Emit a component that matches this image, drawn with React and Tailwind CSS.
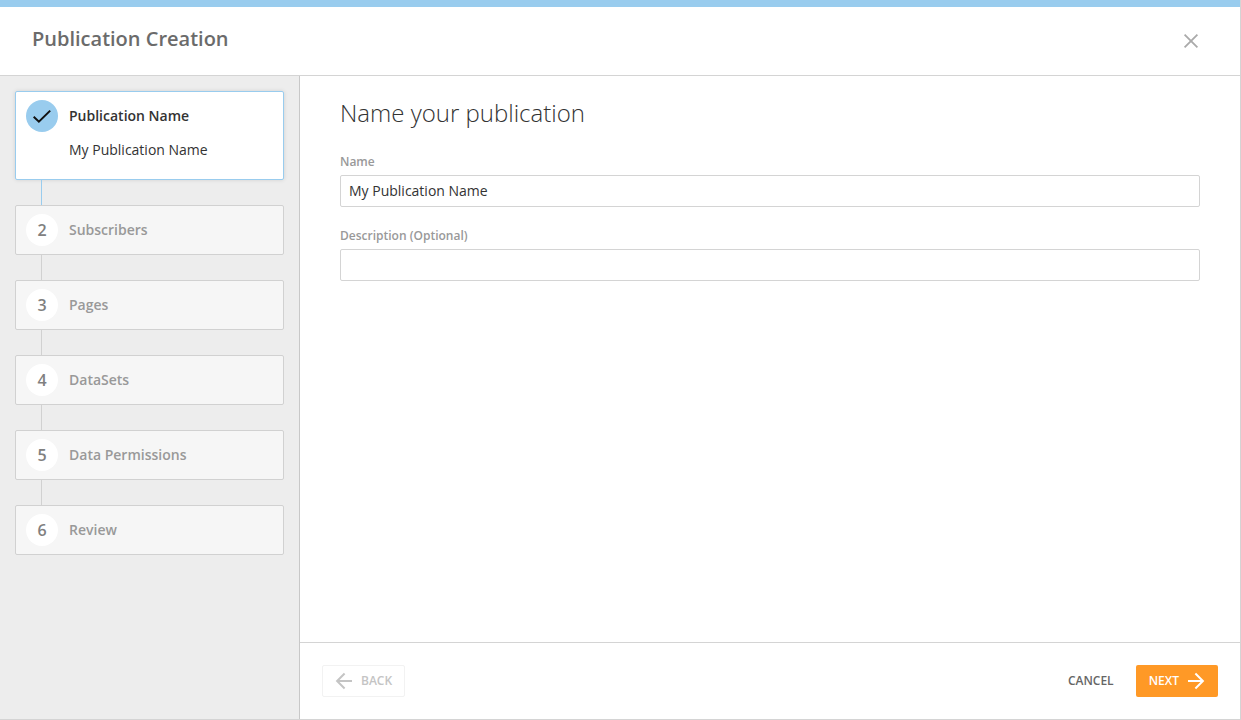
import React, { useState } from "react";

const STEPS = [
  { title: "Publication Name" },
  { title: "Subscribers" },
  { title: "Pages" },
  { title: "DataSets" },
  { title: "Data Permissions" },
  { title: "Review" },
];

function CloseIcon() {
  return (
    <svg width="16" height="16" viewBox="0 0 16 16" fill="none" stroke="currentColor" strokeWidth="1.8" aria-hidden="true">
      <path d="M1.6 1.6 14.4 14.4M14.4 1.6 1.6 14.4" />
    </svg>
  );
}

function CheckIcon() {
  return (
    <svg width="20" height="16" viewBox="0 0 20 16" fill="none" stroke="#111" strokeWidth="2" aria-hidden="true">
      <path d="M1.7 8.7 6.9 13.7 18.2 2.6" />
    </svg>
  );
}

function ArrowIcon({ className }) {
  return (
    <svg className={className} width="18" height="18" viewBox="0 0 18 18" fill="none" stroke="currentColor" strokeWidth="2" aria-hidden="true">
      <path d="M1 9H16M8.4 1.5 15.9 9 8.4 16.5" />
    </svg>
  );
}

function Step({ number, title, value, active }) {
  return (
    <li className="flex flex-col">
      {number > 1 && (
        <span className={number === 2 ? "ml-[26px] h-[25px] w-px bg-[#99ccee]" : "ml-[26px] h-[25px] w-px bg-[#d1d1d1]"} />
      )}
      <button
        type="button"
        aria-current={active ? "step" : undefined}
        className={
          active
            ? "flex w-full items-start gap-[11px] rounded-xs border border-[#99ccee] bg-white px-[10px] pt-2 pb-[17px] text-left shadow-[0_0_4px_rgba(0,0,0,0.12)]"
            : "flex w-full items-start gap-[11px] rounded-xs border border-[#d1d1d1] bg-[#f6f6f6] px-[10px] py-2 text-left"
        }
      >
        <span
          className={
            active
              ? "flex size-8 shrink-0 items-center justify-center rounded-full bg-[#99ccee]"
              : "flex size-8 shrink-0 items-center justify-center rounded-full bg-white text-base font-semibold text-[#808080]"
          }
        >
          {active ? <CheckIcon /> : number}
        </span>
        <span className="flex min-w-0 flex-col">
          <span className={active ? "text-sm leading-8 font-semibold text-[#333]" : "text-sm leading-8 font-semibold text-[#999]"}>{title}</span>
          {active && <span className="min-h-[30px] pt-[6px] text-sm leading-6 text-[#333]">{value}</span>}
        </span>
      </button>
    </li>
  );
}

function Field({ id, label, value, onChange }) {
  return (
    <div className="flex flex-col gap-[3px]">
      <label htmlFor={id} className="text-xs leading-5 font-semibold text-[#999]">{label}</label>
      <input
        id={id}
        type="text"
        value={value}
        onChange={(e) => onChange(e.target.value)}
        className="h-8 w-full rounded-xs border border-[#d4d4d4] bg-white px-2 pb-0.5 text-sm text-[#333] outline-none focus:border-[#99ccee]"
      />
    </div>
  );
}

export default function App() {
  const [name, setName] = useState("My Publication Name");
  const [description, setDescription] = useState("");

  return (
    <div className="flex min-h-screen flex-col border-r border-b border-[#d4d4d4] bg-white font-['Open_Sans',sans-serif] text-[#333]">
      <div className="h-[7px] bg-[#99ccee]" />
      <header className="flex items-center justify-between border-b border-[#d4d4d4] pt-4 pr-[41px] pb-5 pl-8">
        <h1 className="text-xl leading-8 font-semibold text-[#6b6b6b]">Publication Creation</h1>
        <button type="button" aria-label="Close" className="mt-1 text-[#aaa]">
          <CloseIcon />
        </button>
      </header>
      <div className="flex grow">
        <nav aria-label="Steps" className="w-[300px] shrink-0 border-r border-[#c8c8c8] bg-[#ededed] p-[15px]">
          <ol className="flex flex-col">
            {STEPS.map((step, i) => (
              <Step key={step.title} number={i + 1} title={step.title} value={name} active={i === 0} />
            ))}
          </ol>
        </nav>
        <div className="flex min-w-0 grow flex-col">
          <main className="grow px-10 pt-[19px]">
            <h2 className="text-2xl leading-9 font-light">Name your publication</h2>
            <form className="mt-[21px] flex flex-col gap-[19px]">
              <Field id="name" label="Name" value={name} onChange={setName} />
              <Field id="description" label="Description (Optional)" value={description} onChange={setDescription} />
            </form>
          </main>
          <footer className="flex items-center justify-between border-t border-[#d4d4d4] px-[22px] py-[22px] text-xs font-semibold">
            <button type="button" disabled className="flex h-8 items-center gap-2 rounded-xs border border-[#f2f2f2] px-3 text-[#c4c4c4]">
              <ArrowIcon className="rotate-180" />
              BACK
            </button>
            <div className="flex items-center gap-[22px]">
              <button type="button" className="h-8 text-[#666]">CANCEL</button>
              <button type="button" className="flex h-8 items-center gap-2 rounded-xs bg-[#ff9926] px-[13px] text-white">
                NEXT
                <ArrowIcon />
              </button>
            </div>
          </footer>
        </div>
      </div>
    </div>
  );
}
